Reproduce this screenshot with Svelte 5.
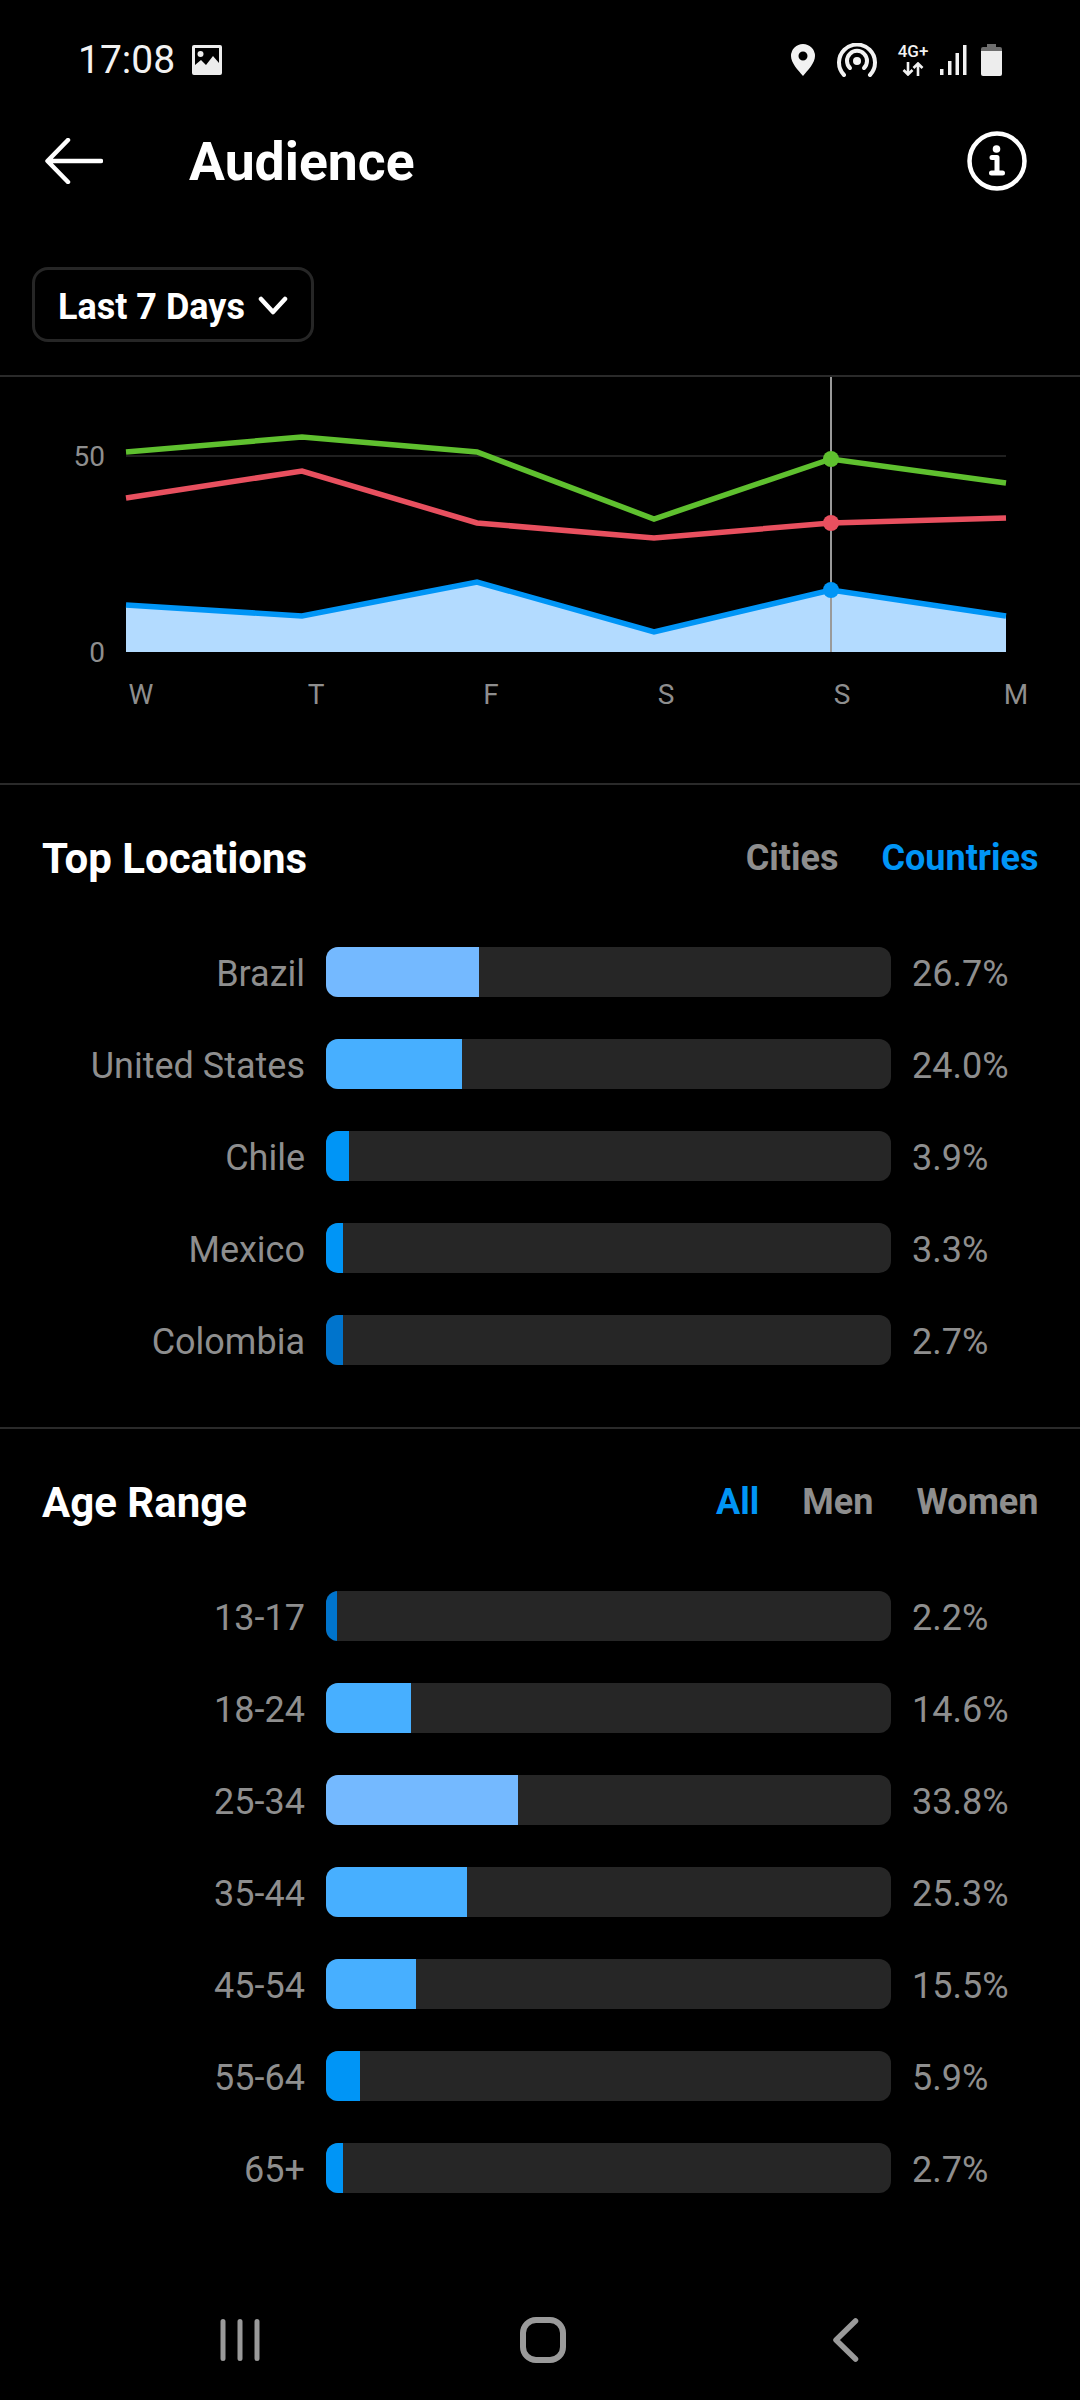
<script lang="ts">
	const locations = [
		{ label: 'Brazil', width: 153, tone: 'lightest', value: '26.7%' },
		{ label: 'United States', width: 136, tone: 'light', value: '24.0%' },
		{ label: 'Chile', width: 23, tone: 'base', value: '3.9%' },
		{ label: 'Mexico', width: 17, tone: 'base', value: '3.3%' },
		{ label: 'Colombia', width: 17, tone: 'dark', value: '2.7%' }
	];

	const ages = [
		{ label: '13-17', width: 11, tone: 'dark', value: '2.2%' },
		{ label: '18-24', width: 85, tone: 'light', value: '14.6%' },
		{ label: '25-34', width: 192, tone: 'lightest', value: '33.8%' },
		{ label: '35-44', width: 141, tone: 'light', value: '25.3%' },
		{ label: '45-54', width: 90, tone: 'light', value: '15.5%' },
		{ label: '55-64', width: 34, tone: 'base', value: '5.9%' },
		{ label: '65+', width: 17, tone: 'base', value: '2.7%' }
	];

	// page y values, shifted to the top of the chart svg (y = 377)
	const xs = [126, 302, 477, 654, 831, 1006];
	const toPoints = (ys: number[]) => ys.map((y, i) => `${xs[i]},${y - 377}`).join(' ');

	const green = toPoints([452, 437, 452, 519, 459, 483]);
	const red = toPoints([498, 471, 523, 538, 523, 518]);
	const blue = toPoints([605, 616, 582, 632, 590, 616]);
	const area = `126,275 ${blue} 1006,275`;

	const dayLabels = [
		{ x: 141, t: 'W' },
		{ x: 316, t: 'T' },
		{ x: 491, t: 'F' },
		{ x: 666, t: 'S' },
		{ x: 842, t: 'S' },
		{ x: 1016, t: 'M' }
	];
</script>

{#snippet barRow(row: { label: string; width: number; tone: string; value: string })}
	<div class="row">
		<span class="label">{row.label}</span>
		<div class="track">
			<div class="fill {row.tone}" style="width: {row.width}px"></div>
		</div>
		<span class="value">{row.value}</span>
	</div>
{/snippet}

<div class="screen">
	<div class="status">
		<div class="status-left">
			<span class="time">17:08</span>
			<svg class="gallery" width="30" height="30" viewBox="0 0 30 30">
				<path
					fill="#ededed"
					fill-rule="evenodd"
					d="M2 0h26a2 2 0 0 1 2 2v26a2 2 0 0 1-2 2H2a2 2 0 0 1-2-2V2a2 2 0 0 1 2-2Zm1 3v17l6-5 5 5 7-9 6 7V3Z"
				/>
				<circle cx="8.500" cy="9" r="3" fill="#ededed" />
			</svg>
		</div>
		<div class="status-right">
			<svg width="24" height="32" viewBox="0 0 24 32">
				<path
					fill="#f2f2f2"
					fill-rule="evenodd"
					d="M12 0a12 12 0 0 1 12 12c0 7-7 14-12 20C7 26 0 19 0 12A12 12 0 0 1 12 0Zm0 7.500a4.500 4.500 0 1 0 0 9 4.500 4.500 0 0 0 0-9Z"
				/>
			</svg>
			<svg class="hotspot" width="40" height="34" viewBox="0 0 40 34">
				<g fill="none" stroke="#f2f2f2" stroke-width="4" stroke-linecap="round">
					<path d="M7 32A18 18 0 1 1 33 32" />
					<path d="M13 25A10 10 0 1 1 27 25" />
				</g>
				<circle cx="20" cy="18" r="4" fill="#f2f2f2" />
			</svg>
			<div class="net">
				<span>4G+</span>
				<svg width="22" height="14" viewBox="0 0 22 14">
					<g fill="none" stroke="#f2f2f2" stroke-width="2.600">
						<path d="M6 0v12M1.500 8 6 12.500 10.500 8" />
						<path d="M16 14V2M11.500 6 16 1.500 20.500 6" />
					</g>
				</svg>
			</div>
			<svg class="signal" width="27" height="30" viewBox="0 0 27 30">
				<g fill="#f2f2f2">
					<rect x="0" y="24" width="3.500" height="6" />
					<rect x="8" y="16" width="3.500" height="14" />
					<rect x="15.500" y="8" width="3.500" height="22" />
					<rect x="23" y="0" width="3.500" height="30" />
				</g>
			</svg>
			<svg class="battery" width="21" height="32" viewBox="0 0 21 32">
				<path fill="#6e6e6e" d="M6 0h9v3h4a2 2 0 0 1 2 2v3H0V5a2 2 0 0 1 2-2h4Z" />
				<path fill="#ededed" d="M0 7h21v23a2 2 0 0 1-2 2H2a2 2 0 0 1-2-2Z" />
			</svg>
		</div>
	</div>

	<div class="nav">
		<svg class="back" width="58" height="46" viewBox="0 0 58 46">
			<path
				d="M56 23H3M23 2 2.500 23 23 44"
				fill="none"
				stroke="#fff"
				stroke-width="4.500"
				stroke-linecap="round"
				stroke-linejoin="round"
			/>
		</svg>
		<h1>Audience</h1>
		<svg class="info" width="60" height="60" viewBox="0 0 60 60">
			<circle cx="30" cy="30" r="27.500" fill="none" stroke="#fff" stroke-width="4.500" />
			<circle cx="29.500" cy="18" r="3.800" fill="#fff" />
			<path
				d="M25 26.500h5v15M24.500 42h11"
				fill="none"
				stroke="#fff"
				stroke-width="5"
				stroke-linecap="round"
				stroke-linejoin="round"
			/>
		</svg>
	</div>

	<div class="filter">
		<button class="range">
			Last 7 Days
			<svg width="30" height="20" viewBox="0 0 30 20">
				<path
					d="M3 3l12 13L27 3"
					fill="none"
					stroke="#fff"
					stroke-width="4.500"
					stroke-linecap="round"
					stroke-linejoin="round"
				/>
			</svg>
		</button>
	</div>

	<div class="chart">
		<svg width="1080" height="406" viewBox="0 0 1080 406">
			<line x1="126" x2="1006" y1="79" y2="79" stroke="#2b2b2b" stroke-width="1.500" />
			<polygon points={area} fill="#b3dbff" />
			<line x1="831" x2="831" y1="0" y2="275" stroke="#9a9a9a" stroke-width="2" />
			<polyline points={green} class="series" stroke="#5fc02f" />
			<polyline points={red} class="series" stroke="#e8505f" />
			<polyline points={blue} class="series" stroke="#0095f6" />
			<circle cx="831" cy="82" r="8" fill="#5fc02f" />
			<circle cx="831" cy="146" r="8" fill="#e8505f" />
			<circle cx="831" cy="213" r="8" fill="#0095f6" />
			<text x="105" y="79" class="axis" text-anchor="end" dominant-baseline="central">50</text>
			<text x="105" y="275" class="axis" text-anchor="end" dominant-baseline="central">0</text>
			{#each dayLabels as d}
				<text x={d.x} y="317" class="axis" text-anchor="middle" dominant-baseline="central">{d.t}</text>
			{/each}
		</svg>
	</div>

	<section class="card">
		<div class="card-head">
			<h2>Top Locations</h2>
			<div class="tabs">
				<span>Cities</span>
				<span class="active">Countries</span>
			</div>
		</div>
		<div class="rows">
			{#each locations as row}
				{@render barRow(row)}
			{/each}
		</div>
	</section>

	<section class="card">
		<div class="card-head">
			<h2>Age Range</h2>
			<div class="tabs">
				<span class="active">All</span>
				<span>Men</span>
				<span>Women</span>
			</div>
		</div>
		<div class="rows">
			{#each ages as row}
				{@render barRow(row)}
			{/each}
		</div>
	</section>

	<div class="softkeys">
		<svg width="44" height="44" viewBox="0 0 44 44">
			<g stroke="#9a9a9a" stroke-width="5" stroke-linecap="round">
				<path d="M5 3.500v37M22 3.500v37M39 3.500v37" />
			</g>
		</svg>
		<svg width="48" height="46" viewBox="0 0 48 46">
			<rect x="4" y="3" width="40" height="40" rx="13" fill="none" stroke="#9a9a9a" stroke-width="6" />
		</svg>
		<svg width="28" height="44" viewBox="0 0 28 44">
			<path
				d="M24.500 3 5 22l19.500 19"
				fill="none"
				stroke="#9a9a9a"
				stroke-width="5.500"
				stroke-linecap="round"
				stroke-linejoin="round"
			/>
		</svg>
	</div>
</div>

<style>
	:global(body) {
		background: #000;
	}

	.screen {
		width: 1080px;
		height: 2400px;
		background: #000;
		color: #fff;
		font-family: Roboto, 'Liberation Sans', sans-serif;
		display: flex;
		flex-direction: column;
		overflow: hidden;
	}

	.status {
		height: 120px;
		display: flex;
		align-items: center;
		justify-content: space-between;
		padding: 0 78px 0 78px;
		box-sizing: border-box;
	}

	.status-left,
	.status-right {
		display: flex;
		align-items: center;
	}

	.time {
		font-size: 39px;
		color: #f2f2f2;
	}

	.gallery {
		margin-left: 17px;
	}

	.hotspot {
		margin-left: 22px;
	}

	.net {
		display: flex;
		flex-direction: column;
		align-items: center;
		margin-left: 21px;
		width: 30px;
		gap: 3px;
	}

	.net span {
		font-size: 17px;
		line-height: 15px;
		font-weight: 500;
		color: #f2f2f2;
	}

	.signal {
		margin-left: 12px;
	}

	.battery {
		margin-left: 14px;
	}

	.nav {
		height: 82px;
		display: flex;
		align-items: center;
		padding: 0 53px 0 45px;
	}

	.nav h1 {
		margin: 0 0 0 86px;
		font-size: 53.500px;
		font-weight: 700;
		flex: 1;
	}

	.filter {
		padding: 65px 0 33px 32px;
	}

	.range {
		box-sizing: border-box;
		width: 282px;
		height: 75px;
		display: flex;
		align-items: center;
		gap: 13px;
		padding: 5px 0 0 23px;
		background: transparent;
		border: 3px solid #262626;
		border-radius: 16px;
		color: #fff;
		font: 700 36px Roboto, sans-serif;
	}

	.range svg {
		margin-top: -3px;
	}

	.chart {
		border-top: 2px solid #2a2a2a;
		height: 406px;
	}

	.chart svg {
		display: block;
	}

	.series {
		fill: none;
		stroke-width: 5.500;
		stroke-linejoin: miter;
	}

	.axis {
		font-size: 28px;
		fill: #8e8e8e;
	}

	.card {
		border-top: 2px solid #2a2a2a;
		padding: 46px 0 62px;
	}

	.card-head {
		height: 54px;
		display: flex;
		align-items: center;
		justify-content: space-between;
		padding: 0 41.500px 0 42px;
		margin-bottom: 62px;
	}

	.card-head h2 {
		margin: 0;
		font-size: 42px;
		font-weight: 700;
	}

	.tabs {
		display: flex;
		gap: 43px;
		font-size: 36px;
		font-weight: 700;
		color: #8e8e8e;
	}

	.tabs .active {
		color: #0095f6;
	}

	.rows {
		display: flex;
		flex-direction: column;
		gap: 42px;
	}

	.row {
		display: grid;
		grid-template-columns: 305px 565px 1fr;
		column-gap: 21px;
		align-items: center;
		font-size: 36px;
		color: #8e8e8e;
	}

	.label,
	.value {
		padding-top: 3px;
	}

	.label {
		text-align: right;
	}

	.track {
		height: 50px;
		background: #262626;
		border-radius: 12px;
		overflow: hidden;
	}

	.fill {
		height: 100%;
	}

	.dark {
		background: #0074cc;
	}

	.base {
		background: #0095f6;
	}

	.light {
		background: #47afff;
	}

	.lightest {
		background: #74b9ff;
	}

	.softkeys {
		margin-top: auto;
		height: 121px;
		display: grid;
		grid-template-columns: repeat(3, 302.5px);
		padding-left: 89px;
		justify-items: center;
		align-items: center;
	}
</style>
